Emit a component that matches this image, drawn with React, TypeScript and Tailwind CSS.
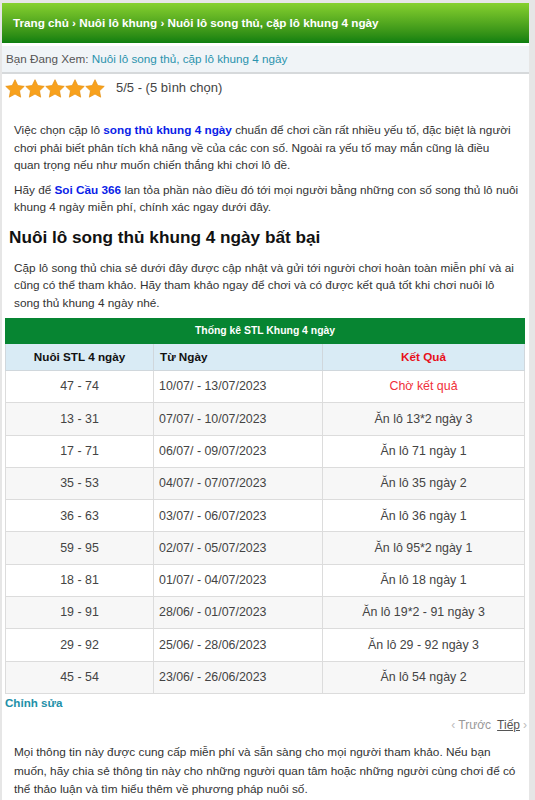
import React from "react";

const rows = [
  ["47 - 74", "10/07/ - 13/07/2023", "Chờ kết quả"],
  ["13 - 31", "07/07/ - 10/07/2023", "Ăn lô 13*2 ngày 3"],
  ["17 - 71", "06/07/ - 09/07/2023", "Ăn lô 71 ngày 1"],
  ["35 - 53", "04/07/ - 07/07/2023", "Ăn lô 35 ngày 2"],
  ["36 - 63", "03/07/ - 06/07/2023", "Ăn lô 36 ngày 1"],
  ["59 - 95", "02/07/ - 05/07/2023", "Ăn lô 95*2 ngày 1"],
  ["18 - 81", "01/07/ - 04/07/2023", "Ăn lô 18 ngày 1"],
  ["19 - 91", "28/06/ - 01/07/2023", "Ăn lô 19*2 - 91 ngày 3"],
  ["29 - 92", "25/06/ - 28/06/2023", "Ăn lô 29 - 92 ngày 3"],
  ["45 - 54", "23/06/ - 26/06/2023", "Ăn lô 54 ngày 2"],
];

function Star() {
  return (
    <svg width="20" height="19" viewBox="0 0 24 23">
      <path
        d="M12 0.8l3.4 7.1 7.8 1-5.7 5.4 1.4 7.7L12 18.3 5.1 22l1.4-7.7L0.8 8.9l7.8-1z"
        fill="#f8a11c"
        stroke="#e58e0c"
        strokeWidth="0.8"
      />
    </svg>
  );
}

export default function App() {
  return (
    <div
      className="min-h-[800px] bg-[#e6e6e6] pt-[3px] pl-[2px] pr-[6px] text-[#333]"
      style={{ fontFamily: '"Liberation Sans", Arial, sans-serif' }}
    >
      <div className="bg-white min-h-[797px]">
        {/* Breadcrumb */}
        <div className="h-[40px] flex items-center px-[11px] bg-gradient-to-b from-[#86d12f] to-[#0a7f10] text-white font-bold text-[11.7px]">
          Trang chủ › Nuôi lô khung › Nuôi lô song thủ, cặp lô khung 4 ngày
        </div>
        <div className="mt-[3px] h-[28px] flex items-center px-[4px] bg-[#f0f4f7] border-b-2 border-[#d6d9db] text-[11.7px]">
          <span className="text-[#555]">Bạn Đang Xem:&nbsp;</span>
          <span className="text-[#2b93ad]">Nuôi lô song thủ, cặp lô khung 4 ngày</span>
        </div>

        {/* Rating */}
        <div className="flex items-center pl-[3px] pt-[2px] h-[24px] box-content">
          <div className="flex">
            <Star />
            <Star />
            <Star />
            <Star />
            <Star />
          </div>
          <span className="ml-[11px] text-[#444] text-[13px]">5/5 - (5 bình chọn)</span>
        </div>

        {/* Intro */}
        <div className="pl-[12px] pt-[21px] leading-[17.5px] text-[11.75px]">
          <p className="pr-[14px]">
            Việc chọn cặp lô <span className="text-[#0a1ee8] font-bold">song thủ khung 4 ngày</span> chuẩn để chơi cần rất nhiều yếu tố, đặc biệt là người chơi phải biết phân tích khả năng về của các con số. Ngoài ra yếu tố may mắn cũng là điều quan trọng nếu như muốn chiến thắng khi chơi lô đề.
          </p>
          <p className="mt-[7px] pr-[6px]">
            Hãy để <span className="text-[#0a1ee8] font-bold">Soi Cầu 366</span> lan tỏa phần nào điều đó tới mọi người bằng những con số song thủ lô nuôi khung 4 ngày miễn phí, chính xác ngay dưới đây.
          </p>
        </div>
        <h2 className="pl-[7px] mt-[8px] text-[17.2px] font-bold text-[#111] leading-[26px]">
          Nuôi lô song thủ khung 4 ngày bất bại
        </h2>
        <p className="pl-[12px] pr-[10px] mt-[10px] leading-[17.5px] text-[11.8px]">
          Cặp lô song thủ chia sẻ dưới đây được cập nhật và gửi tới người chơi hoàn toàn miễn phí và ai cũng có thể tham khảo. Hãy tham khảo ngay để chơi và có được kết quả tốt khi chơi nuôi lô song thủ khung 4 ngày nhé.
        </p>

        {/* Table */}
        <table className="ml-[3px] mt-[6px] w-[520px] border-collapse text-[12.4px]">
          <thead>
            <tr>
              <th colSpan={3} className="h-[25px] bg-[#078532] text-white text-[10.4px] font-bold border border-[#078532]">
                Thống kê STL Khung 4 ngày
              </th>
            </tr>
            <tr className="bg-[#d9ebf5] h-[27px]">
              <th className="w-[148px] border border-[#d0d7dc] font-bold text-[#111] text-[11.7px]">Nuôi STL 4 ngày</th>
              <th className="w-[169px] border border-[#d0d7dc] font-bold text-[#111] text-[11.7px] text-left pl-[6px]">Từ Ngày</th>
              <th className="border border-[#d0d7dc] font-bold text-[#e8101a] text-[11.7px]">Kết Quả</th>
            </tr>
          </thead>
          <tbody>
            {rows.map((r, i) => (
              <tr key={i} className={i % 2 === 0 ? "bg-white h-[32.3px]" : "bg-[#f7f7f7] h-[32.3px]"}>
                <td className="border border-[#dcdcdc] text-center text-[#444]">{r[0]}</td>
                <td className="border border-[#dcdcdc] text-left pl-[5px] text-[#444]">{r[1]}</td>
                <td className={i === 0 ? "border border-[#dcdcdc] text-center text-[#f0303a]" : "border border-[#dcdcdc] text-center text-[#444]"}>
                  {r[2]}
                </td>
              </tr>
            ))}
          </tbody>
        </table>

        <div className="pl-[3px] text-[#2290a8] font-bold text-[11.6px]">Chỉnh sửa</div>
        <div className="flex justify-end items-center gap-[6px] pr-[2px] mt-[5px] text-[12px]">
          <span className="text-[#999]">
            <span className="text-[#bbb]">‹</span> Trước
          </span>
          <span className="text-[#555] underline">Tiếp</span>
          <span className="text-[#bbb] -ml-[3px]">›</span>
        </div>
        <p className="pl-[12px] pr-[10px] mt-[9px] leading-[18.5px] text-[11.8px]">
          Mọi thông tin này được cung cấp miễn phí và sẵn sàng cho mọi người tham khảo. Nếu bạn muốn, hãy chia sẻ thông tin này cho những người quan tâm hoặc những người cùng chơi để có thể thảo luận và tìm hiểu thêm về phương pháp nuôi số.
        </p>
      </div>
    </div>
  );
}
